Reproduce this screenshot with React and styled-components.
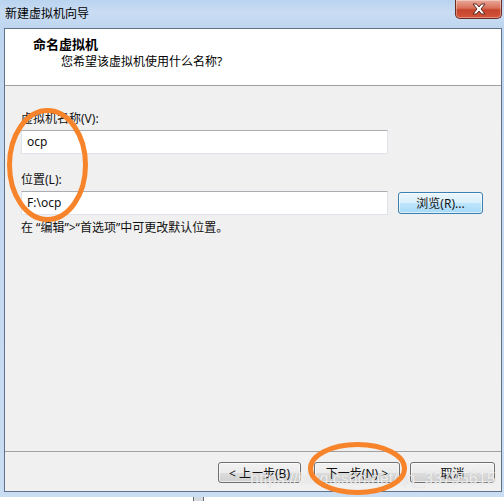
import React from 'react'
import styled, {createGlobalStyle} from 'styled-components'

const GlobalStyle = createGlobalStyle`
    body {
        margin: 0;
        background: #fff;
        font-family: "Noto Sans", "Noto Sans CJK SC", sans-serif;
        font-size: 12px;
        color: #000;
    }
`

// latin glyphs from Noto Sans (narrow quotes), han from the CJK family
const UI = `"Noto Sans", "Noto Sans CJK SC", sans-serif`

const App = () => {
    return (
        <>
        <GlobalStyle />
        <Page>
            <Window>
                <TitleBar>
                    <Title>新建虚拟机向导</Title>
                    <CloseButton>
                        <svg width="16" height="12" viewBox="0 0 16 12">
                            <path
                                d="M2 1 L5.5 1 L8 4 L10.5 1 L14 1 L10 6 L14 11 L10.5 11 L8 8 L5.5 11 L2 11 L6 6 Z"
                                fill="#fff"
                                stroke="#5a2a20"
                                strokeWidth="1"
                                strokeLinejoin="round"
                            />
                        </svg>
                    </CloseButton>
                </TitleBar>
                <Frame>
                    <Client>
                        <Header>
                            <HeaderTitle>命名虚拟机</HeaderTitle>
                            <HeaderSub>您希望该虚拟机使用什么名称?</HeaderSub>
                        </Header>
                        <Body>
                            <Label>虚拟机名称(V):</Label>
                            <Row>
                                <TextBox>ocp</TextBox>
                            </Row>
                            <Label top={18}>位置(L):</Label>
                            <Row>
                                <TextBox>F:\ocp</TextBox>
                                <Button hot width={85} height={22}>浏览(R)...</Button>
                            </Row>
                            <Hint>在 “编辑”&gt;“首选项”中可更改默认位置。</Hint>
                        </Body>
                        <Footer>
                            <Button width={83}>&lt; 上一步(B)</Button>
                            <Button width={86} gap={13}>下一步(N) &gt;</Button>
                            <Button width={85} gap={10}>取消</Button>
                        </Footer>
                    </Client>
                </Frame>

                <Watermark>https://blog.csdn.net/qq_33795615</Watermark>

                <Annotation width="504" height="497" viewBox="0 0 504 497">
                    <ellipse cx="47.5" cy="165" rx="38" ry="54.5" fill="none" stroke="#f7842a" strokeWidth="5" />
                    <ellipse cx="357.5" cy="468.5" rx="47" ry="24" fill="none" stroke="#f7842a" strokeWidth="5" />
                </Annotation>
            </Window>
            <Below>
                <Behind />
            </Below>
        </Page>
        </>
    )
}

const Page = styled.div`
    width: 504px;
    height: 501px;
    overflow: hidden;
`

const Window = styled.div`
    position: relative;
    width: 504px;
    height: 497px;
    display: flex;
    flex-direction: column;
    background: linear-gradient(to bottom, #b9d3ef 0px, #c9dcf3 12px, #bfd6f0 28px, #c4d9f1 200px, #c9ddf3 497px);
`

const TitleBar = styled.div`
    height: 28px;
    display: flex;
    justify-content: space-between;
    align-items: flex-start;
    padding-left: 5px;
    flex-shrink: 0;
`

const Title = styled.div`
    font-family: ${UI};
    font-size: 12px;
    line-height: 28px;
    color: #000;
`

const CloseButton = styled.div`
    width: 45px;
    height: 18px;
    margin-right: 2px;
    border: 1px solid #6b2a22;
    border-top: none;
    border-radius: 0 0 5px 5px;
    background: linear-gradient(to bottom, #e9a99a 0%, #d9705a 45%, #c6442c 55%, #d4553b 100%);
    display: flex;
    align-items: center;
    justify-content: center;
    box-shadow: inset 0 0 0 1px rgba(255, 255, 255, 0.35);
`

const Frame = styled.div`
    flex: 1;
    display: flex;
    min-height: 0;
    padding: 0 2px 5px 4px;
`

const Client = styled.div`
    flex: 1;
    display: flex;
    flex-direction: column;
    border: 1px solid #5f7288;
    background: #f0f0f0;
`

const Header = styled.div`
    height: 56px;
    box-sizing: border-box;
    flex-shrink: 0;
    background: #fff;
    padding: 6px 0 0 28px;
`

const HeaderTitle = styled.div`
    font-family: ${UI};
    font-weight: bold;
    font-size: 13px;
    line-height: 18px;
`

const HeaderSub = styled.div`
    font-family: ${UI};
    font-size: 12px;
    line-height: 16px;
    margin: 1px 0 0 28px;
`

const Body = styled.div`
    flex: 1;
    padding: 25px 0 0 16px;
    border-top: 1px solid #a0a0a0;
    border-bottom: 1px solid #a0a0a0;
`

const Label = styled.div`
    font-family: ${UI};
    font-size: 12px;
    line-height: 16px;
    margin-top: ${props => props.top || 0}px;
    margin-bottom: 3px;
    color: #111;
`

const Row = styled.div`
    display: flex;
    align-items: center;
    gap: 10px;
`

const TextBox = styled.div`
    width: 367px;
    height: 24px;
    box-sizing: border-box;
    background: #fff;
    border: 1px solid #dfe3ea;
    border-top-color: #abadb3;
    padding-left: 5px;
    font-size: 12px;
    line-height: 22px;
    color: #111;
`

const Hint = styled.div`
    font-family: ${UI};
    font-size: 12px;
    line-height: 16px;
    margin-top: 5px;
    color: #111;
`

const Button = styled.div`
    width: ${props => props.width}px;
    height: ${props => props.height || 21}px;
    margin-left: ${props => props.gap || 0}px;
    box-sizing: border-box;
    border: 1px solid ${props => props.hot ? '#3c7fb1' : '#707070'};
    border-radius: 3px;
    background: ${props => props.hot
        ? 'linear-gradient(to bottom, #eaf6fd 0%, #d9f0fc 50%, #bee6fd 51%, #a7d9f5 100%)'
        : 'linear-gradient(to bottom, #f2f2f2 0%, #ebebeb 50%, #dddddd 51%, #cfcfcf 100%)'};
    box-shadow: inset 0 0 0 1px rgba(255, 255, 255, 0.6);
    display: flex;
    align-items: center;
    justify-content: center;
    font-family: ${UI};
    font-size: 12px;
    color: #111;
`

const Footer = styled.div`
    height: 39px;
    flex-shrink: 0;
    display: flex;
    align-items: flex-start;
    justify-content: flex-end;
    padding: 10px 6px 0 0;
    box-sizing: border-box;
`

const Watermark = styled.div`
    position: absolute;
    left: 250px;
    top: 469px;
    font-family: "Liberation Sans", Arial, sans-serif;
    font-size: 16px;
    line-height: 20px;
    color: rgba(255, 255, 255, 0.75);
    text-shadow: 0 0 1px rgba(150, 150, 150, 0.5);
    pointer-events: none;
`

const Annotation = styled.svg`
    position: absolute;
    left: 0;
    top: 0;
    pointer-events: none;
`

const Below = styled.div`
    height: 4px;
    background: #fff;
    display: flex;
`

const Behind = styled.div`
    width: 9px;
    height: 4px;
    margin-left: 193px;
    background: #d6dbe2;
    border-left: 1px solid #6a6a6a;
    border-right: 1px solid #6a6a6a;
`

export default App
